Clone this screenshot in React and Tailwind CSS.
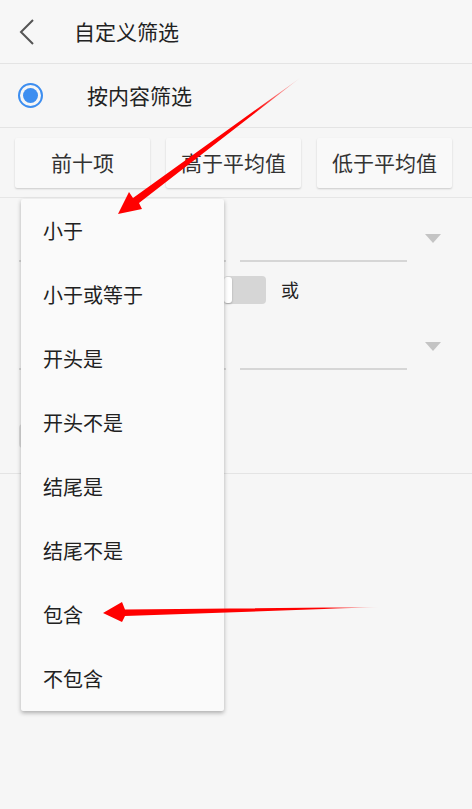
import React from "react";

const menuItems = ["小于", "小于或等于", "开头是", "开头不是", "结尾是", "结尾不是", "包含", "不包含"];

const Caret = () => (
  <svg width="16" height="10" viewBox="0 0 16 10" className="shrink-0">
    <path d="M0 0 L16 0 L8 9 Z" fill="#c4c4c4" />
  </svg>
);

const App = () => {
  return (
    <div
      className="relative w-[472px] h-[809px] overflow-hidden bg-[#f6f6f6] text-[#222]"
      style={{ fontFamily: '"Noto Sans CJK SC", "Noto Sans", sans-serif' }}
    >
      {/* Header */}
      <div className="h-[64px] flex items-center border-b border-[#e4e4e4] bg-[#f7f7f7]">
        <svg width="20" height="28" viewBox="0 0 20 28" className="ml-[17px]">
          <path d="M16 2 L4 14 L16 26" fill="none" stroke="#555" strokeWidth="2" />
        </svg>
        <span className="ml-[37px] text-[21px] leading-none">自定义筛选</span>
      </div>

      {/* Radio row */}
      <div className="h-[64px] flex items-center border-b border-[#e4e4e4]">
        <div className="ml-[18px] w-[25px] h-[25px] rounded-full border-[2.5px] border-[#3d8ef0] flex items-center justify-center">
          <div className="w-[15px] h-[15px] rounded-full bg-[#3d8ef0]" />
        </div>
        <span className="ml-[44px] text-[21px] leading-none">按内容筛选</span>
      </div>

      {/* Quick buttons */}
      <div className="h-[70px] flex items-start gap-[16px] px-[15px] pt-[10px] border-b border-[#e6e6e6]">
        {["前十项", "高于平均值", "低于平均值"].map((t) => (
          <div
            key={t}
            className="w-[135px] h-[50px] flex items-center justify-center bg-[#f9f9f9] rounded-[2px] shadow-[0_1px_2px_rgba(0,0,0,0.18)] text-[21px] text-[#333]"
          >
            {t}
          </div>
        ))}
      </div>

      {/* Conditions (mostly hidden under the menu) */}
      <div className="h-[276px] border-b border-[#e4e4e4] px-[19px]">
        <div className="h-[64px] flex items-end gap-[14px]">
          <div className="w-[207px] border-b-2 border-[#d6d6d6]" />
          <div className="w-[167px] h-[64px] border-b-2 border-[#d6d6d6]" />
          <div className="h-[64px] pt-[36px] pl-[4px]">
            <Caret />
          </div>
        </div>
        <div className="h-[44px] flex items-start pt-[14px] pl-[205px]">
          <div className="w-[42px] h-[28px] rounded-[4px] bg-[#d6d6d6] flex items-center">
            <div className="w-[8px] h-[26px] bg-white rounded-[3px] shadow-[0_1px_2px_rgba(0,0,0,0.25)]" />
          </div>
          <span className="ml-[15px] mt-[4px] text-[18px] leading-none">或</span>
        </div>
        <div className="h-[64px] flex items-end gap-[14px]">
          <div className="w-[207px] border-b-2 border-[#d6d6d6]" />
          <div className="w-[167px] h-[64px] border-b-2 border-[#d6d6d6]" />
          <div className="h-[64px] pt-[36px] pl-[4px]">
            <Caret />
          </div>
        </div>
        <div className="h-[103px] pt-[54px]">
          <div className="w-[20px] h-[24px] rounded-[4px] border-2 border-[#dcdcdc]" />
        </div>
      </div>

      {/* Dropdown menu */}
      <div className="absolute left-[21px] top-[199px] w-[203px] bg-[#fafafa] rounded-[2px] shadow-[0_2px_4px_rgba(0,0,0,0.3)]">
        {menuItems.map((item) => (
          <div key={item} className="h-[64px] flex items-center pl-[22px] text-[20px] text-[#212121]">
            {item}
          </div>
        ))}
      </div>

      {/* Red annotation arrows */}
      <svg className="absolute left-0 top-0 pointer-events-none" width="472" height="809">
        <defs>
          <linearGradient id="g1" x1="300" y1="78" x2="118" y2="213" gradientUnits="userSpaceOnUse">
            <stop offset="0" stopColor="#ff0000" stopOpacity="0.1" />
            <stop offset="0.25" stopColor="#ff0000" />
            <stop offset="1" stopColor="#ff0000" />
          </linearGradient>
          <linearGradient id="g2" x1="378" y1="607" x2="103" y2="613" gradientUnits="userSpaceOnUse">
            <stop offset="0" stopColor="#ff0000" stopOpacity="0.05" />
            <stop offset="0.2" stopColor="#ff0000" />
            <stop offset="1" stopColor="#ff0000" />
          </linearGradient>
        </defs>
        <path d="M300 78 L139 203 L142 209 L118 214 L129 192 L133 198 L300 78 Z" fill="url(#g1)" />
        <path d="M380 607 L125 609.5 L122 602 L103 613 L122 622 L125 616 Z" fill="url(#g2)" />
      </svg>
    </div>
  );
};

export default App;
